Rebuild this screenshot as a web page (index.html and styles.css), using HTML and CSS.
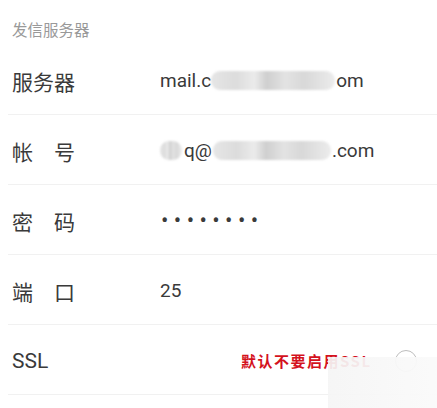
FILE: index.html
```html
<!DOCTYPE html>
<html lang="zh-CN">
<head>
    <meta charset="UTF-8">
    <meta name="viewport" content="width=device-width, initial-scale=1.0">
    <title>发信服务器</title>
    <link rel="stylesheet" href="styles.css">
</head>
<body>
    <div class="page">
        <div class="section-title">发信服务器</div>

        <div class="row">
            <span class="label">服务器</span>
            <span class="value">mail.c<span class="mosaic wide"></span>om</span>
        </div>
        <div class="row">
            <span class="label">帐　号</span>
            <span class="value"><span class="mosaic small"></span>q@<span class="mosaic mid"></span>.com</span>
        </div>
        <div class="row">
            <span class="label">密　码</span>
            <span class="value dots">••••••••</span>
        </div>
        <div class="row">
            <span class="label">端　口</span>
            <span class="value">25</span>
        </div>
        <div class="row">
            <span class="label">SSL</span>
            <span class="note">默认不要启用SSL</span>
            <span class="toggle"></span>
        </div>

        <!-- watermark haze in the corner -->
        <div class="haze"></div>
    </div>
</body>
</html>
```

FILE: styles.css
```css
body {
    margin: 0;
    background: #fff;
    font-family: Roboto, "Noto Sans CJK SC", sans-serif;
    color: #333;
}

.page {
    position: relative;
    width: 437px;
    height: 408px;
    overflow: hidden;
}

.section-title {
    height: 45px;
    box-sizing: border-box;
    padding: 21px 0 0 12px;
    font-size: 15.5px;
    line-height: 20px;
    color: #999;
}

.row {
    display: flex;
    align-items: center;
    height: 70px;
    box-sizing: border-box;
    margin-left: 8px;
    padding: 2px 20px 0 4px;
    border-bottom: 1px solid #f1f1f1;
}

.label {
    width: 148px;
    flex-shrink: 0;
    font-size: 21px;
    color: #3a3a3a;
}

.value {
    display: flex;
    align-items: center;
    font-size: 19px;
    color: #3a3a3a;
}

.dots {
    font-size: 22px;
    letter-spacing: 5.4px;
    margin-left: 1px;
}

.mosaic {
    display: inline-block;
    height: 19px;
    border-radius: 9px;
    background: linear-gradient(90deg, #e6e6e6 0%, #dcdcdc 20%, #ebebeb 35%, #cfcfcf 45%, #e3e3e3 60%, #d8d8d8 75%, #ececec 100%);
    filter: blur(1px);
}

.mosaic.wide {
    width: 124px;
    margin: 0 1px 0 0;
}

.mosaic.small {
    width: 22px;
    margin-right: 2px;
}

.mosaic.mid {
    width: 118px;
    margin: 0 1px;
}

.note {
    margin-left: 81px;
    font-family: "Noto Sans CJK SC", sans-serif;
    font-weight: 700;
    font-size: 15px;
    letter-spacing: 1.5px;
    color: #d4121d;
}

.toggle {
    margin-left: auto;
    width: 20px;
    height: 20px;
    border: 1.5px solid #bdbdbd;
    border-radius: 50%;
}

.haze {
    position: absolute;
    left: 328px;
    top: 357px;
    right: 0;
    bottom: 0;
    background: linear-gradient(90deg, rgba(245, 245, 245, 0.92), rgba(250, 250, 250, 0.96));
}
```
